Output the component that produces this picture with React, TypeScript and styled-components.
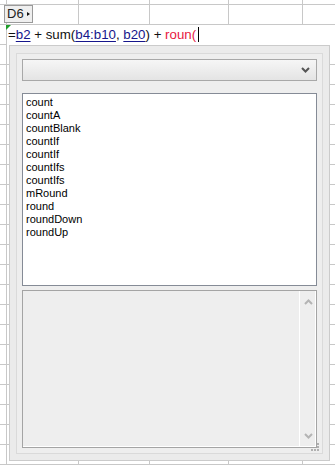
import * as React from 'react';
import styled, { createGlobalStyle } from 'styled-components';

const GlobalStyle = createGlobalStyle`
	html, body {
		margin: 0;
		padding: 0;
		background: #fff;
	}
	body {
		font-family: "Liberation Sans", Arial, sans-serif;
	}
`;

const gridLine = '#c8c8c8';
const columns = [6, 78, 149, 228, 302];

const Sheet = styled.div`
	width: 335px;
	height: 465px;
	overflow: hidden;
	background-color: #fff;
	background-image:
		${columns.map(() => `linear-gradient(${gridLine}, ${gridLine})`).join(', ')},
		linear-gradient(to bottom, ${gridLine} 0 1px, transparent 1px);
	background-size: ${columns.map(() => '1px 100%').join(', ')}, 100% 20px;
	background-position: ${columns.map(x => `${x}px 0`).join(', ')}, 0 4px;
	background-repeat: ${columns.map(() => 'no-repeat').join(', ')}, repeat;
`;

const NameRow = styled.div`
	height: 25px;
	padding: 4px 0 0 4px;
	box-sizing: border-box;
`;

const NameBox = styled.div`
	display: inline-flex;
	align-items: center;
	gap: 3px;
	height: 16px;
	padding: 0 2px 0 2px;
	background: #efefef;
	border: 1px solid #9a9a9a;
	font-size: 13px;
	color: #222;
	line-height: 16px;
`;

const DropArrow = styled.span`
	width: 0;
	height: 0;
	border-top: 2.5px solid transparent;
	border-bottom: 2.5px solid transparent;
	border-left: 3px solid #111;
`;

const FormulaRow = styled.div`
	position: relative;
	margin-left: 7px;
	height: 20px;
	background: #fff;
	padding: 1px 0 0 1px;
	box-sizing: border-box;
	font-size: 13.3px;
	line-height: 18px;
	color: #111;
	white-space: pre;
`;

const ErrorMark = styled.span`
	position: absolute;
	left: -1px;
	top: 0;
	width: 0;
	height: 0;
	border-top: 5px solid #1f9d2a;
	border-right: 5px solid transparent;
`;

const Ref = styled.span`
	color: #16168c;
	text-decoration: underline;
	text-underline-offset: 2px;
`;

const Partial = styled.span`
	color: #e8173f;
`;

const Caret = styled.span`
	display: inline-block;
	width: 1px;
	height: 15px;
	margin-left: 2px;
	background: #000;
	vertical-align: -3px;
`;

const Popup = styled.div`
	position: relative;
	margin: 0 0 0 9px;
	width: 321px;
	height: 416px;
	box-sizing: border-box;
	border: 1px solid #cbcbcb;
	background: #ebebeb;
	padding: 7px 6px 6px 6px;
`;

const Inner = styled.div`
	display: flex;
	flex-direction: column;
	height: 100%;
	box-sizing: border-box;
	border: 1px solid #dadada;
	background: #eeeeee;
	padding: 5px;
`;

const Select = styled.div`
	display: flex;
	align-items: center;
	justify-content: flex-end;
	height: 22px;
	box-sizing: border-box;
	border: 1px solid #a8a8a8;
	background: linear-gradient(to bottom, #f6f6f6, #e4e4e4);
	padding-right: 6px;
`;

const List = styled.ul`
	list-style: none;
	margin: 12px 0 0 0;
	height: 193px;
	box-sizing: border-box;
	border: 1px solid #858b96;
	background: #fff;
	padding: 2px 3px;
	font-size: 11px;
	line-height: 13px;
	color: #000;
`;

const ListItem = styled.li`
	margin: 0;
	padding: 0;
`;

const Details = styled.div`
	display: flex;
	margin-top: 4px;
	flex: 1;
	box-sizing: border-box;
	border: 1px solid #a4a4a4;
	box-shadow: inset -1px -1px 0 #fff;
	background: #eeeeee;
`;

const DetailsBody = styled.div`
	flex: 1;
`;

const ScrollTrack = styled.div`
	display: flex;
	flex-direction: column;
	justify-content: space-between;
	align-items: center;
	width: 17px;
	border-left: 1px solid #fff;
	padding: 8px 0 8px 0;
	box-sizing: border-box;
`;

const Grip = styled.svg`
	position: absolute;
	right: 9px;
	bottom: 9px;
`;

const Chevron = ({ up, color, width }: { up?: boolean; color: string; width: number }) => (
	<svg width="9" height="6" viewBox="0 0 9 6">
		<polyline
			points={up ? '1,5 4.5,1.5 8,5' : '1,1 4.5,4.5 8,1'}
			fill="none"
			stroke={color}
			strokeWidth={width}
		/>
	</svg>
);

const functions = [
	'count',
	'countA',
	'countBlank',
	'countIf',
	'countIf',
	'countIfs',
	'countIfs',
	'mRound',
	'round',
	'roundDown',
	'roundUp',
];

export default function App() {
	return (
		<Sheet>
			<GlobalStyle />
			<NameRow>
				<NameBox>
					D6
					<DropArrow />
				</NameBox>
			</NameRow>
			<FormulaRow>
				<ErrorMark />
				=<Ref>b2</Ref> + sum(<Ref>b4:b10</Ref>, <Ref>b20</Ref>) + <Partial>roun(</Partial>
				<Caret />
			</FormulaRow>
			<Popup>
				<Inner>
					<Select>
						<Chevron color="#555" width={2} />
					</Select>
					<List>
						{functions.map((name, i) => (
							<ListItem key={i}>{name}</ListItem>
						))}
					</List>
					<Details>
						<DetailsBody />
						<ScrollTrack>
							<Chevron up color="#b4b4b4" width={2} />
							<Chevron color="#b4b4b4" width={2} />
						</ScrollTrack>
					</Details>
				</Inner>
				<Grip width="9" height="8" viewBox="0 0 9 8">
					<rect x="6" y="0" width="2" height="2" fill="#b0b0b0" />
					<rect x="6" y="3" width="2" height="2" fill="#b0b0b0" />
					<rect x="0" y="6" width="2" height="2" fill="#b0b0b0" />
					<rect x="3" y="6" width="2" height="2" fill="#b0b0b0" />
					<rect x="6" y="6" width="2" height="2" fill="#b0b0b0" />
				</Grip>
			</Popup>
		</Sheet>
	);
}
